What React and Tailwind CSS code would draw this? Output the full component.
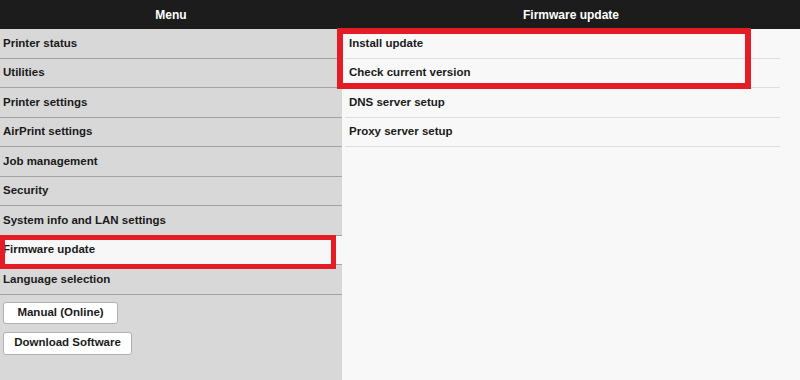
import React from "react";

const menu = [
  "Printer status",
  "Utilities",
  "Printer settings",
  "AirPrint settings",
  "Job management",
  "Security",
  "System info and LAN settings",
  "Firmware update",
  "Language selection",
];

const sub = ["Install update", "Check current version", "DNS server setup", "Proxy server setup"];

export default function App() {
  return (
    <div
      className="relative w-[800px] h-[380px] overflow-hidden text-[11.5px] font-bold text-[#1a1a1a]"
      style={{ fontFamily: '"Liberation Sans", Arial, sans-serif' }}
    >
      <div className="flex h-[29px] bg-[#1c1c1c] text-white text-[12px]">
        <div className="w-[342px] flex items-center justify-center">Menu</div>
        <div className="flex-1 flex items-center justify-center">Firmware update</div>
      </div>
      <div className="flex h-[351px]">
        <div className="w-[342px] bg-[#d8d8d8] flex flex-col">
          {menu.map((m) => (
            <div
              key={m}
              className={`h-[29.5px] flex items-center pl-[3px] border-b border-[#a3a3a3] ${
                m === "Firmware update" ? "bg-[#f7f7f7]" : ""
              }`}
            >
              {m}
            </div>
          ))}
          <div className="flex flex-col items-start gap-[8px] pt-[7px] pl-[3px]">
            <button className="w-[115px] h-[22px] bg-white border border-[#b0b0b0] rounded-[3px] text-center">
              Manual (Online)
            </button>
            <button className="w-[129px] h-[23px] bg-white border border-[#b0b0b0] rounded-[3px] text-center">
              Download Software
            </button>
          </div>
        </div>
        <div className="flex-1 bg-[#f8f8f8] pl-[3px]">
          <div className="w-[435px] flex flex-col">
            {sub.map((s) => (
              <div key={s} className="h-[29.5px] flex items-center pl-[4px] border-b border-[#dedede]">
                {s}
              </div>
            ))}
          </div>
        </div>
      </div>
      <div className="absolute left-0 top-[235px] w-[336px] h-[34px] border-[5px] border-[#e31c25]" />
      <div className="absolute left-[337px] top-[28px] w-[414px] h-[61px] border-[6px] border-[#e31c25]" />
    </div>
  );
}
